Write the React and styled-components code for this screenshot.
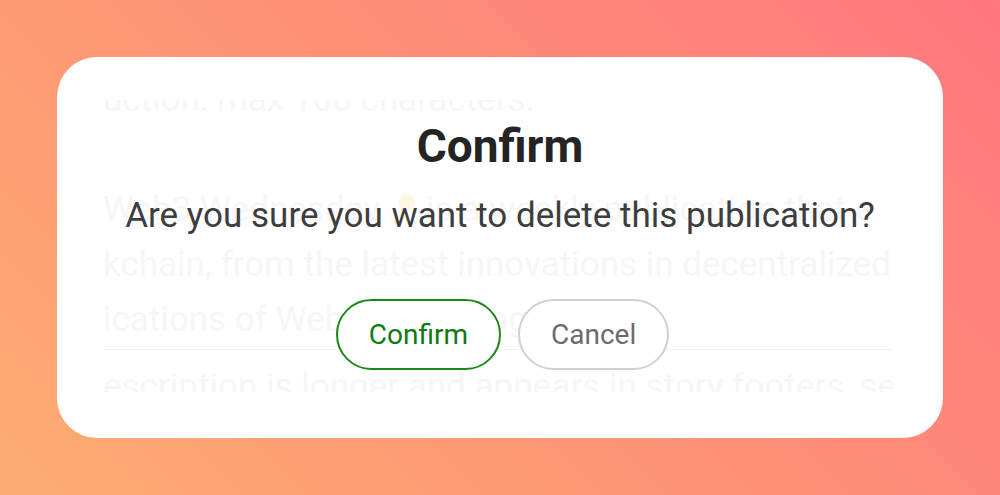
import React from "react";
import styled, { createGlobalStyle } from "styled-components";

const GlobalStyle = createGlobalStyle`
  html, body {
    margin: 0;
    padding: 0;
  }
  body {
    font-family: Roboto, "Noto Sans", sans-serif;
  }
`;

const Page = styled.main`
  width: 1000px;
  height: 495px;
  display: flex;
  align-items: center;
  justify-content: center;
  background: linear-gradient(45deg, #fcad72 0%, #fe9176 50%, #ff777e 100%);
`;

const Card = styled.section`
  width: 886px;
  height: 381px;
  background: #fff;
  border-radius: 40px;
  display: grid;
  grid-template-rows: minmax(0, 1fr);
  overflow: hidden;
`;

// faded page content showing through behind the dialog
const Backdrop = styled.div`
  grid-area: 1 / 1;
  min-height: 0;
  margin: 43px 50px 46px 46px;
  overflow: hidden;
  font-size: 35px;
  line-height: 55px;
  color: #f6f6f6;
  white-space: nowrap;
`;

const BackLine = styled.div`
  display: flex;
  align-items: center;
  gap: 8px;
  margin-top: ${(p) => p.$top || 0}px;
`;

const Rule = styled.hr`
  border: none;
  border-top: 1px solid #f3f3f3;
  margin: 2px 0 9px;
`;

const Dialog = styled.div`
  grid-area: 1 / 1;
  display: flex;
  flex-direction: column;
  align-items: center;
  padding-top: 63px;
`;

const Title = styled.h2`
  margin: 0;
  font-size: 46px;
  line-height: 52px;
  font-weight: 700;
  color: #242424;
`;

const Message = styled.p`
  margin: 22px 0 0;
  font-size: 35px;
  line-height: 44px;
  color: #3d3d3d;
`;

const Actions = styled.div`
  display: flex;
  gap: 17px;
  margin-top: 61px;
  padding-left: 5px;
`;

const Button = styled.button`
  height: 71px;
  padding: 0 31px;
  border-radius: 36px;
  background: #fff;
  font-family: inherit;
  font-size: 28px;
  border: 2px solid ${(p) => (p.$primary ? "#1a8917" : "#d0d0d0")};
  color: ${(p) => (p.$primary ? "#0f7a12" : "#6b6b6b")};
  cursor: pointer;
`;

const KeyIcon = () => (
  <svg width="30" height="36" viewBox="0 0 30 36">
    <circle cx="19" cy="10" r="8" fill="#fdf6e4" />
    <path d="M14 15 L4 31 L8 33 L10 29 L13 30 L15 25 L18 17 Z" fill="#fdf6e4" />
  </svg>
);

const App = () => {
  return (
    <>
      <GlobalStyle />
      <Page>
        <Card>
          <Backdrop aria-hidden="true">
            <BackLine $top={-28}>uction: max 100 characters.</BackLine>
            <BackLine $top={55}>
              Web3 Wednesday <KeyIcon /> is a weekly publication that e
            </BackLine>
            <BackLine>kchain, from the latest innovations in decentralized</BackLine>
            <BackLine>ications of Web3 technology.</BackLine>
            <Rule />
            <BackLine>escription is longer and appears in story footers, search results and</BackLine>
          </Backdrop>
          <Dialog>
            <Title>Confirm</Title>
            <Message>Are you sure you want to delete this publication?</Message>
            <Actions>
              <Button $primary>Confirm</Button>
              <Button>Cancel</Button>
            </Actions>
          </Dialog>
        </Card>
      </Page>
    </>
  );
};

export default App;
